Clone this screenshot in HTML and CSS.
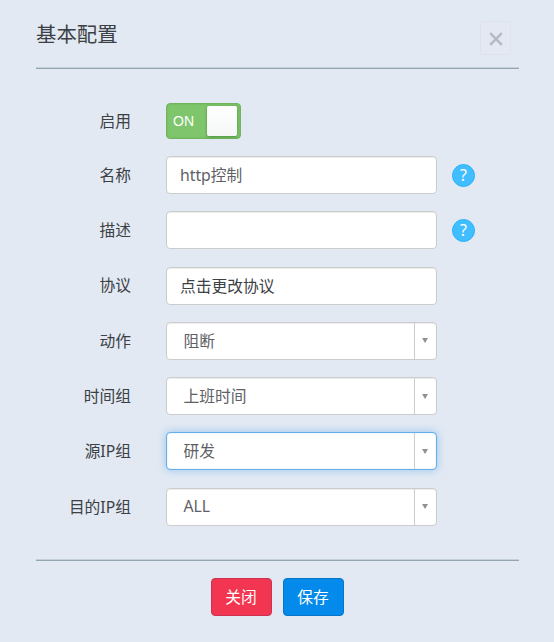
FILE: index.html
```html
<!DOCTYPE html>
<html lang="zh-CN">
<head>
    <meta charset="UTF-8">
    <meta name="viewport" content="width=device-width, initial-scale=1.0">
    <title>基本配置</title>
    <link rel="stylesheet" href="styles.css">
</head>
<body>
    <div class="config-panel">
        <div class="panel-header">
            <h2>基本配置</h2>
            <button type="button" class="close-btn" aria-label="关闭">
                <svg width="14" height="14" viewBox="0 0 14 14"><path d="M1.2 1.2L12.8 12.8M12.8 1.2L1.2 12.8" stroke="#b5b9c2" stroke-width="2.4" fill="none"/></svg>
            </button>
        </div>
        <div class="panel-body">
            <div class="form-group switch-group">
                <label>启用</label>
                <div class="switch"><span>ON</span><i class="switch-handle"></i></div>
            </div>
            <div class="form-group">
                <label for="name">名称</label>
                <input type="text" id="name" class="form-control" value="http控制">
                <span class="help">?</span>
            </div>
            <div class="form-group">
                <label for="desc">描述</label>
                <input type="text" id="desc" class="form-control">
                <span class="help">?</span>
            </div>
            <div class="form-group">
                <label>协议</label>
                <div class="form-control dark">点击更改协议</div>
            </div>
            <div class="form-group">
                <label>动作</label>
                <div class="form-control select"><span>阻断</span><i class="arrow"></i></div>
            </div>
            <div class="form-group">
                <label>时间组</label>
                <div class="form-control select"><span>上班时间</span><i class="arrow"></i></div>
            </div>
            <div class="form-group">
                <label>源IP组</label>
                <div class="form-control select focus"><span>研发</span><i class="arrow"></i></div>
            </div>
            <div class="form-group">
                <label>目的IP组</label>
                <div class="form-control select"><span>ALL</span><i class="arrow"></i></div>
            </div>
        </div>
        <div class="panel-footer">
            <button type="button" class="btn btn-close">关闭</button>
            <button type="button" class="btn btn-save">保存</button>
        </div>
    </div>
</body>
</html>
```

FILE: styles.css
```css
* {
    box-sizing: border-box;
}
body {
    margin: 0;
    background-color: #e2e9f3;
    font-family: "Noto Sans", "Noto Sans CJK SC", sans-serif;
    font-size: 15.75px;
    color: #3c3f44;
}
input, button {
    font: inherit;
}
.config-panel {
    height: 642px;
    padding: 0 35px 0 36px;
}
.panel-header {
    display: flex;
    justify-content: space-between;
    height: 69px;
    border-bottom: 1px solid #93a5b0;
    box-shadow: inset 0 -1px #c4d0da;
}
.panel-header h2 {
    margin: 0;
    font-size: 20.4px;
    font-weight: normal;
    line-height: 68px;
}
.close-btn {
    display: flex;
    align-items: center;
    justify-content: center;
    width: 31px;
    height: 34px;
    margin: 21px 8px 0 0;
    padding: 1px 0 0;
    border: 1px solid #dfe2ea;
    border-radius: 3px;
    background-color: #e3e8f2;
}
.panel-body {
    height: 491px;
    padding-top: 33px;
}
.form-group {
    display: grid;
    grid-template-columns: 95px 271px 24px;
    column-gap: 35px;
    align-items: center;
    height: 38px;
    margin-bottom: 17.3px;
}
.switch-group {
    margin-bottom: 16px;
}
.form-group label {
    padding-bottom: 1.5px;
    text-align: right;
    white-space: nowrap;
}
.form-control {
    display: flex;
    align-items: center;
    width: 270.5px;
    height: 38px;
    padding: 0 13px 1px;
    border: 1px solid #ccc;
    border-radius: 4px;
    background-color: #fff;
    box-shadow: inset 0 1px 1px rgba(0, 0, 0, 0.075);
    color: #5d6065;
    outline: none;
}
.form-control.dark {
    color: #3c3f44;
}
.select {
    justify-content: space-between;
    padding: 0 0 0 16.5px;
}
.select span {
    padding-bottom: 1px;
}
.focus {
    border-color: #66afe9;
    box-shadow: inset 0 0 1px #66afe9, 0 0 8px rgba(102, 175, 233, 0.6);
}
.arrow {
    display: flex;
    align-items: center;
    justify-content: center;
    width: 22px;
    height: 100%;
    border-left: 1px solid #ccc;
}
.arrow::before {
    content: "";
    border: 3.5px solid transparent;
    border-width: 5px 3.5px 0;
    border-top-color: #8e9297;
    margin-right: 1px;
}
.help {
    width: 23px;
    height: 23px;
    margin: 0 0 0 -20px;
    border: 1px solid #27b2fb;
    border-radius: 50%;
    background-color: #41beff;
    color: #fff;
    font-size: 16px;
    line-height: 21px;
    text-align: center;
}
.switch {
    display: flex;
    align-items: center;
    justify-content: space-between;
    width: 74.5px;
    height: 36px;
    padding: 0 3px 0 6px;
    border: 1px solid #71b55f;
    border-radius: 4px;
    background-color: #7ec56b;
    box-shadow: inset 0 0 2px rgba(70, 140, 50, 0.3);
    color: #fff;
    font-family: "Liberation Sans", Arial, sans-serif;
    font-size: 14px;
}
.switch-handle {
    width: 30px;
    height: 30px;
    border-radius: 2px;
    background: linear-gradient(#fff, #f5f7f7);
    box-shadow: 0 1px 3px rgba(0, 70, 0, 0.4);
}
.panel-footer {
    display: flex;
    justify-content: center;
    gap: 11px;
    padding: 17px 1px 0 0;
    border-top: 1px solid #93a5b0;
    box-shadow: 0 -1px #c4d0da;
}
.btn {
    width: 61px;
    height: 38px;
    padding: 0 0 1px;
    border: 1px solid;
    border-radius: 4px;
    color: #fff;
}
.btn-close {
    background-color: #f23550;
    border-color: #ca3450;
}
.btn-save {
    background-color: #048aea;
    border-color: #0675c8;
}
```
